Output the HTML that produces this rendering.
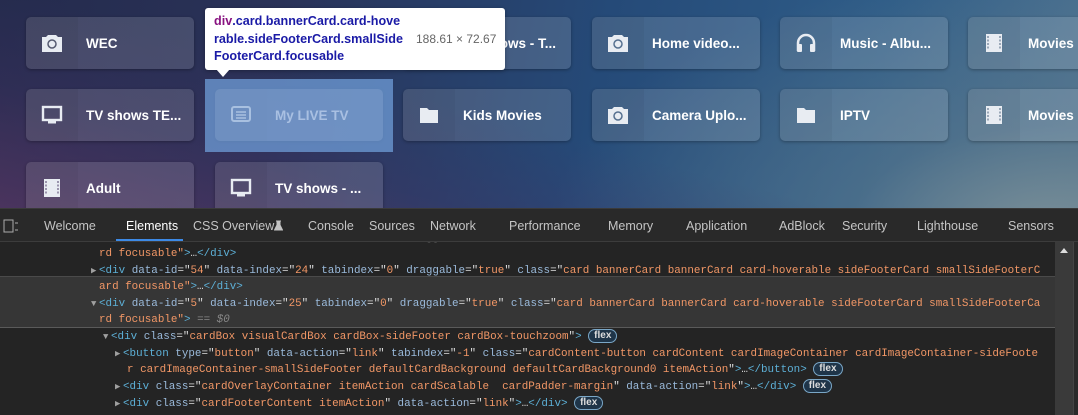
<!DOCTYPE html>
<html><head><meta charset="utf-8"><style>
*{margin:0;padding:0;box-sizing:border-box}
body{width:1078px;height:415px;overflow:hidden;position:relative;font-family:"Liberation Sans",sans-serif;background:#242424}
#top{position:absolute;left:0;top:0;width:1078px;height:208px;overflow:hidden;
background:radial-gradient(ellipse 500px 260px at 1050px 230px,#7a8f98 0%,rgba(90,120,140,.6) 40%,rgba(45,90,135,0) 100%),
linear-gradient(100deg,#242b4d 0%,#2a3258 25%,#254a78 55%,#2f5d88 80%,#4d7290 100%);}
#top:before{content:"";position:absolute;inset:0;background:linear-gradient(15deg,rgba(90,55,100,.7) 0%,rgba(70,50,100,.3) 25%,rgba(0,0,0,0) 45%)}
.card{position:absolute;width:168px;height:52px;border-radius:5px;background:rgba(255,255,255,.14);box-shadow:0 1px 3px rgba(0,0,0,.3);display:flex;align-items:center}
.ic{width:52px;height:52px;background:rgba(0,0,0,.04);border-radius:5px 0 0 5px;display:flex;align-items:center;justify-content:center}
.card span{color:#fff;font-weight:bold;font-size:13.5px;margin-left:8px;white-space:nowrap}
.ov{position:absolute;left:205px;top:79px;width:188px;height:73px;background:rgba(111,158,216,.75)}
.tip{position:absolute;left:205px;top:8px;width:300px;height:62px;background:#fff;border-radius:3px;box-shadow:0 1px 4px rgba(0,0,0,.3);padding:5px 9px;font-size:12.6px;line-height:17.5px;color:#1a1aa6;font-weight:bold;white-space:nowrap}
.tip b{color:#881280}
.tip i{position:absolute;left:211px;top:23px;font-style:normal;font-weight:normal;color:#666;font-size:12px}
.arr{position:absolute;left:216px;top:69px;width:0;height:0;border-left:7px solid transparent;border-right:7px solid transparent;border-top:8px solid #fff}
#tabs{position:absolute;left:0;top:208px;width:1078px;height:34px;background:#292929;border-top:1px solid #3a3a3a;border-bottom:1px solid #3c3c3c;color:#c4c4c4;font-size:12.5px;white-space:nowrap}
#tabs span{position:absolute;top:10px;line-height:15px}
#tabs .act{color:#fff}
#code{position:absolute;left:0;top:242px;width:1055px;height:173px;overflow:hidden;font-family:"Liberation Mono",monospace;font-size:10.9px;color:#ddd;white-space:pre}
.l{position:absolute;height:16.5px;line-height:16.5px}
.t{color:#5db0d7}.a{color:#9bbbdc}.v{color:#f29766}.g{color:#888;font-style:italic}
.fl{display:inline-block;border:1px solid #7aa7c7;border-radius:9px;font-size:10px;line-height:12px;padding:0 5px;color:#ddd;background:#1f3549;font-family:"Liberation Sans",sans-serif;font-weight:bold;vertical-align:1px}
.sel{position:absolute;left:0;top:34px;width:1055px;height:52px;background:#363636;border-top:1px solid #4a4a4a;border-bottom:1px solid #5a5a5a}
.tr{position:absolute;color:#a0a0a0;font-size:9px}
</style></head><body>
<div id="top">
<div class="card" style="left:26px;top:17px"><div class="ic"><svg width="22" height="20" viewBox="0 0 22 20"><path d="M7 2h8l2 2h4v15H1V4h4z" fill="#e8ecf2"/><circle cx="11" cy="11" r="4" fill="none" stroke="#555a70" stroke-width="1.5"/></svg></div><span>WEC</span></div>
<div class="card" style="left:403px;top:17px"><div class="ic"></div><span>TV shows - T...</span></div>
<div class="card" style="left:592px;top:17px"><div class="ic"><svg width="22" height="20" viewBox="0 0 22 20"><path d="M7 2h8l2 2h4v15H1V4h4z" fill="#e8ecf2"/><circle cx="11" cy="11" r="4" fill="none" stroke="#557090" stroke-width="1.5"/></svg></div><span>Home video...</span></div>
<div class="card" style="left:780px;top:17px"><div class="ic"><svg width="20" height="20" viewBox="0 0 20 20"><path d="M2 18v-8a8 8 0 0116 0v8" fill="none" stroke="#e8ecf2" stroke-width="2.5"/><rect x="1" y="11" width="5" height="8" rx="1" fill="#e8ecf2"/><rect x="14" y="11" width="5" height="8" rx="1" fill="#e8ecf2"/></svg></div><span>Music - Albu...</span></div>
<div class="card" style="left:968px;top:17px"><div class="ic"><svg width="18" height="20" viewBox="0 0 18 20"><rect x="1" y="1" width="16" height="18" fill="#e8ecf2"/><path d="M3 3v14M15 3v14" stroke="#7a8aa0" stroke-width="1.4" stroke-dasharray="2 1.5"/></svg></div><span>Movies</span></div>
<div class="card" style="left:26px;top:89px"><div class="ic"><svg width="22" height="20" viewBox="0 0 22 20"><rect x="2" y="2" width="18" height="13" fill="none" stroke="#e8ecf2" stroke-width="2.4"/><rect x="7" y="16" width="8" height="2.5" fill="#e8ecf2"/></svg></div><span>TV shows TE...</span></div>
<div class="card" style="left:215px;top:89px"><div class="ic"></div><span></span></div>
<div class="card" style="left:403px;top:89px"><div class="ic"><svg width="20" height="18" viewBox="0 0 20 18"><path d="M1 2h7l2 2h9v13H1z" fill="#e8ecf2"/></svg></div><span>Kids Movies</span></div>
<div class="card" style="left:592px;top:89px"><div class="ic"><svg width="22" height="20" viewBox="0 0 22 20"><path d="M7 2h8l2 2h4v15H1V4h4z" fill="#e8ecf2"/><circle cx="11" cy="11" r="4" fill="none" stroke="#557090" stroke-width="1.5"/></svg></div><span>Camera Uplo...</span></div>
<div class="card" style="left:780px;top:89px"><div class="ic"><svg width="20" height="18" viewBox="0 0 20 18"><path d="M1 2h7l2 2h9v13H1z" fill="#e8ecf2"/></svg></div><span>IPTV</span></div>
<div class="card" style="left:968px;top:89px"><div class="ic"><svg width="18" height="20" viewBox="0 0 18 20"><rect x="1" y="1" width="16" height="18" fill="#e8ecf2"/><path d="M3 3v14M15 3v14" stroke="#7a8aa0" stroke-width="1.4" stroke-dasharray="2 1.5"/></svg></div><span>Movies</span></div>
<div class="card" style="left:26px;top:162px"><div class="ic"><svg width="18" height="20" viewBox="0 0 18 20"><rect x="1" y="1" width="16" height="18" fill="#e8ecf2"/><path d="M3 3v14M15 3v14" stroke="#7a7090" stroke-width="1.4" stroke-dasharray="2 1.5"/></svg></div><span>Adult</span></div>
<div class="card" style="left:215px;top:162px"><div class="ic"><svg width="22" height="20" viewBox="0 0 22 20"><rect x="2" y="2" width="18" height="13" fill="none" stroke="#e8ecf2" stroke-width="2.4"/><rect x="7" y="16" width="8" height="2.5" fill="#e8ecf2"/></svg></div><span>TV shows - ...</span></div>
<div class="ov"></div>
<div class="card" style="left:215px;top:89px;background:rgba(255,255,255,.06);box-shadow:none"><div class="ic" style="background:none"><svg width="22" height="20" viewBox="0 0 22 20"><rect x="2" y="2" width="18" height="14" rx="2" fill="none" stroke="#a8c0e0" stroke-width="2"/><path d="M6 7h10M6 10h10M6 13h10" stroke="#a8c0e0" stroke-width="1.6"/></svg></div><span style="color:#a9c0e2">My LIVE TV</span></div>
<div class="tip"><b>div</b>.card.bannerCard.card-hove<br>rable.sideFooterCard.smallSide<br>FooterCard.focusable<i>188.61 × 72.67</i></div>
<div class="arr"></div>
</div>
<div id="tabs">
<svg style="position:absolute;left:3px;top:10px" width="16" height="14" viewBox="0 0 16 14"><rect x="1" y="1" width="9" height="12" fill="none" stroke="#aaa"/><path d="M12 4h3M12 11h3" stroke="#aaa"/></svg>
<span style="left:44px">Welcome</span>
<span class="act" style="left:126px">Elements</span>
<div style="position:absolute;left:116px;top:30px;width:67px;height:2px;background:#3d8ae6"></div>
<span style="left:193px">CSS Overview</span>
<svg style="position:absolute;left:274px;top:11px" width="9" height="11" viewBox="0 0 9 11"><path d="M2 1h5M3 1v4L0.5 10h8L6 5V1" fill="#c4c4c4" stroke="#c4c4c4"/></svg>
<span style="left:308px">Console</span>
<span style="left:369px">Sources</span>
<span style="left:430px">Network</span>
<span style="left:509px">Performance</span>
<span style="left:608px">Memory</span>
<span style="left:686px">Application</span>
<span style="left:779px">AdBlock</span>
<span style="left:842px">Security</span>
<span style="left:917px">Lighthouse</span>
<span style="left:1008px">Sensors</span>
</div>
<div id="code">
<div class="sel"></div>
<div class="l" style="left:99px;top:-12px;color:#6a6a6a">&lt;div data-id="53" data-index="23" tabindex="0" draggable="true" class="card bannerCard bannerCard card-hoverable sideFooterCard smallSideFooterCa</div>
<div class="l" style="left:99px;top:4px"><span class="v">rd focusable"</span><span class="t">&gt;</span>…<span class="t">&lt;/div&gt;</span></div>
<span class="tr" style="left:91px;top:24px">▶</span>
<div class="l" style="left:99px;top:21px"><span class="t">&lt;div </span><span class="a">data-id</span>="<span class="v">54</span>" <span class="a">data-index</span>="<span class="v">24</span>" <span class="a">tabindex</span>="<span class="v">0</span>" <span class="a">draggable</span>="<span class="v">true</span>" <span class="a">class</span>="<span class="v">card bannerCard bannerCard card-hoverable sideFooterCard smallSideFooterC</span></div>
<div class="l" style="left:99px;top:37px"><span class="v">ard focusable"</span><span class="t">&gt;</span>…<span class="t">&lt;/div&gt;</span></div>
<span class="tr" style="left:91px;top:57px">▼</span>
<div class="l" style="left:99px;top:54px"><span class="t">&lt;div </span><span class="a">data-id</span>="<span class="v">5</span>" <span class="a">data-index</span>="<span class="v">25</span>" <span class="a">tabindex</span>="<span class="v">0</span>" <span class="a">draggable</span>="<span class="v">true</span>" <span class="a">class</span>="<span class="v">card bannerCard bannerCard card-hoverable sideFooterCard smallSideFooterCa</span></div>
<div class="l" style="left:99px;top:70px"><span class="v">rd focusable"</span><span class="t">&gt;</span> <span class="g">== $0</span></div>
<span class="tr" style="left:103px;top:90px">▼</span>
<div class="l" style="left:111px;top:87px"><span class="t">&lt;div </span><span class="a">class</span>="<span class="v">cardBox visualCardBox cardBox-sideFooter cardBox-touchzoom</span>"<span class="t">&gt;</span> <span class="fl">flex</span></div>
<span class="tr" style="left:115px;top:107px">▶</span>
<div class="l" style="left:123px;top:104px"><span class="t">&lt;button </span><span class="a">type</span>="<span class="v">button</span>" <span class="a">data-action</span>="<span class="v">link</span>" <span class="a">tabindex</span>="<span class="v">-1</span>" <span class="a">class</span>="<span class="v">cardContent-button cardContent cardImageContainer cardImageContainer-sideFoote</span></div>
<div class="l" style="left:127px;top:120px"><span class="v">r cardImageContainer-smallSideFooter defaultCardBackground defaultCardBackground0 itemAction</span>"<span class="t">&gt;</span>…<span class="t">&lt;/button&gt;</span> <span class="fl">flex</span></div>
<span class="tr" style="left:115px;top:140px">▶</span>
<div class="l" style="left:123px;top:137px"><span class="t">&lt;div </span><span class="a">class</span>="<span class="v">cardOverlayContainer itemAction cardScalable  cardPadder-margin</span>" <span class="a">data-action</span>="<span class="v">link</span>"<span class="t">&gt;</span>…<span class="t">&lt;/div&gt;</span> <span class="fl">flex</span></div>
<span class="tr" style="left:115px;top:157px">▶</span>
<div class="l" style="left:123px;top:154px"><span class="t">&lt;div </span><span class="a">class</span>="<span class="v">cardFooterContent itemAction</span>" <span class="a">data-action</span>="<span class="v">link</span>"<span class="t">&gt;</span>…<span class="t">&lt;/div&gt;</span> <span class="fl">flex</span></div>
</div>
<div style="position:absolute;left:1055px;top:242px;width:18px;height:173px;background:#3a3a3a"><div style="position:absolute;left:5px;top:6px;border-left:4px solid transparent;border-right:4px solid transparent;border-bottom:5px solid #ddd"></div></div>
<div style="position:absolute;left:1073px;top:242px;width:5px;height:173px;background:#2a2a2a;border-left:1px solid #444"></div>
</body></html>
